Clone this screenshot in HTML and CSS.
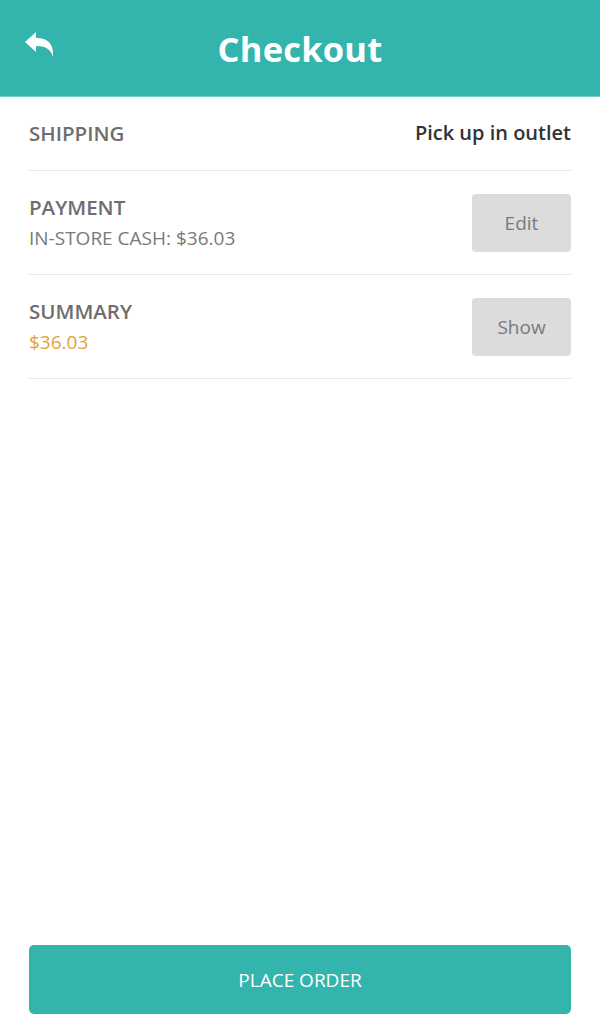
FILE: index.html
```html
<!DOCTYPE html>
<html>
<head>
<meta charset="utf-8">
<link rel="stylesheet" href="styles.css">
</head>
<body>
<div class="page">
  <header class="topbar">
    <span class="back">
      <svg width="30" height="26" viewBox="0 0 30 26"><path d="M0 10 L11 0 L11 6 C22 6 29 11 28 25 C26 17 20 14 11 14 L11 20 Z" fill="#fff"/></svg>
    </span>
    <h1 class="title">Checkout</h1>
  </header>
  <main class="content">
    <div class="row row-ship">
      <span class="label">SHIPPING</span>
      <span class="value">Pick up in outlet</span>
    </div>
    <div class="row row-tall">
      <div class="info">
        <span class="label">PAYMENT</span>
        <span class="sub">IN-STORE CASH: $36.03</span>
      </div>
      <button class="btn">Edit</button>
    </div>
    <div class="row row-tall">
      <div class="info">
        <span class="label">SUMMARY</span>
        <span class="sub price">$36.03</span>
      </div>
      <button class="btn">Show</button>
    </div>
  </main>
  <footer class="footer">
    <button class="place">PLACE ORDER</button>
  </footer>
</div>
</body>
</html>
```

FILE: styles.css
```css
* { box-sizing: border-box; }
html, body { margin: 0; padding: 0; }
body {
  font-family: "Open Sans", "Noto Sans", sans-serif;
  background: #fff;
  width: 600px;
  height: 1024px;
}
.page {
  display: flex;
  flex-direction: column;
  height: 1024px;
}
.topbar {
  height: 97px;
  background: #33b5ae;
  display: flex;
  align-items: center;
  justify-content: center;
  position: relative;
  border-bottom: 1px solid #6ccdc6;
}
.back {
  position: absolute;
  left: 25px;
  top: 32px;
  display: block;
  line-height: 0;
}
.title {
  margin: 0;
  color: #fff;
  font-weight: 700;
  font-size: 34.5px;
  letter-spacing: 0.2px;
}
.content {
  flex: 1;
  padding: 0 29px;
}
.row {
  display: flex;
  justify-content: space-between;
  align-items: center;
  border-bottom: 1px solid #e6e6e6;
}
.row-ship { height: 74px; padding-bottom: 2px; }
.row-tall { height: 104px; }
.label {
  color: #6e6e6e;
  font-size: 20.5px;
  font-weight: 600;
  line-height: 28px;
}
.value {
  color: #333;
  font-size: 20px;
  font-weight: 600;
}
.info {
  display: flex;
  flex-direction: column;
  gap: 4px;
  margin-top: -2px;
}
.sub {
  color: #7a7a7a;
  font-size: 19px;
  line-height: 26px;
}
.price { color: #e2a23b; }
.btn {
  width: 99px;
  height: 58px;
  background: #dcdcdc;
  border: none;
  border-radius: 4px;
  color: #7a7a7a;
  font-family: inherit;
  font-size: 19px;
}
.footer {
  padding: 0 29px 10px;
}
.place {
  width: 100%;
  height: 69px;
  background: #33b5ae;
  border: none;
  border-radius: 5px;
  color: #fff;
  font-family: inherit;
  font-size: 19px;
}
```
